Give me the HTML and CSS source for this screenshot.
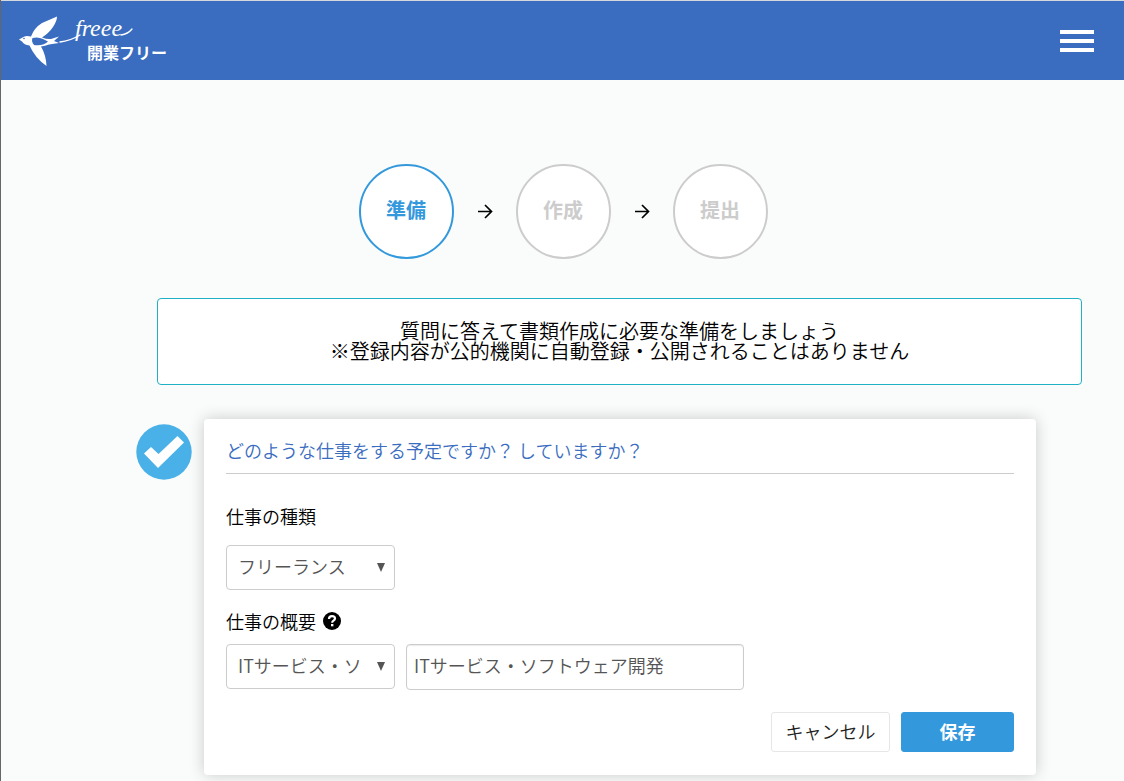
FILE: index.html
```html
<!DOCTYPE html>
<html lang="ja">
<head>
<meta charset="utf-8">
<meta name="viewport" content="width=device-width, initial-scale=1">
<title>開業フリー</title>
<link rel="stylesheet" href="styles.css">
</head>
<body>
<header class="header">
  <a class="logo" href="#" aria-label="freee 開業フリー">
    <svg class="logo-art" width="150" height="52" viewBox="19 14 150 52">
      <path fill="#fff" d="M19 38.500L22.500 36.500Q25 34 31 35.500Q34 27 42 22L57 15.500Q57 20 53 26Q49 32 42 36.500Q47 38.500 51 38L59 35.500L54 40L59 42L49 43.500Q45 45 41 45.500Q46 54 46.500 65Q35 57 29.500 44.500Q24 44 22 40.500Z"/>
      <path fill="#3a6dc0" d="M32.500 37Q38 35.500 43 38L48 40.500Q44 45 34 44Q31 40.500 32.500 37Z"/>
      <circle cx="24" cy="37.500" r="0.800" fill="#3a6dc0"/>
      <path fill="none" stroke="#fff" stroke-width="1.300" stroke-linecap="round" d="M60 41Q70 40 80 34M121 34Q128 33 132 28"/>
      <text class="logo-script" x="75" y="35">freee</text>
      <text class="logo-name" x="87" y="58">開業フリー</text>
    </svg>
  </a>
  <button class="menu" type="button" aria-label="メニュー"><span class="menu-bar"></span><span class="menu-bar"></span><span class="menu-bar"></span></button>
</header>
<main class="main">
  <ol class="steps">
    <li class="step step-current">準備</li>
    <li class="arrow" aria-hidden="true"><svg width="16" height="16" viewBox="0 0 16 16"><path d="M1 7.500H14.500M8 1L14.500 7.500L8 14" fill="none" stroke="#000" stroke-width="1.700"/></svg></li>
    <li class="step">作成</li>
    <li class="arrow" aria-hidden="true"><svg width="16" height="16" viewBox="0 0 16 16"><path d="M1 7.500H14.500M8 1L14.500 7.500L8 14" fill="none" stroke="#000" stroke-width="1.700"/></svg></li>
    <li class="step">提出</li>
  </ol>
  <p class="notice">質問に答えて書類作成に必要な準備をしましょう<br>※登録内容が公的機関に自動登録・公開されることはありません</p>
  <section class="question">
    <svg class="done" width="56" height="56" viewBox="0 0 56 56" aria-label="完了" role="img"><circle cx="28" cy="28" r="27.700" fill="#49b1e7"/><path fill="#fff" d="M8 29.500L15 23L22.500 30L41.500 12L48 18.500L22 44Z"/></svg>
    <form class="card">
      <h2 class="card-title">どのような仕事をする予定ですか？ していますか？</h2>
      <label class="label" for="kind">仕事の種類</label>
      <div class="fields">
        <div class="pick">
          <select class="select" id="kind"><option>フリーランス</option></select>
          <svg class="caret" width="8" height="9" viewBox="0 0 8 9"><path d="M0 0H8L4 9Z" fill="#555"/></svg>
        </div>
      </div>
      <div class="label-row">
        <label class="label" for="summary">仕事の概要</label>
        <button class="help" type="button" aria-label="ヘルプ"><svg width="18" height="18" viewBox="0 0 18 18"><circle cx="9" cy="9" r="9" fill="#000"/><path d="M6 7Q6 4.200 9 4.200Q12 4.200 12 6.600Q12 8 10.400 8.700Q9.200 9.200 9.200 10.700" fill="none" stroke="#fff" stroke-width="2.200"/><path d="M8 12H10.400V14.300H8Z" fill="#fff"/></svg></button>
      </div>
      <div class="fields">
        <div class="pick">
          <select class="select" id="summary"><option>ITサービス・ソフトウェア</option></select>
          <svg class="caret" width="8" height="9" viewBox="0 0 8 9"><path d="M0 0H8L4 9Z" fill="#555"/></svg>
        </div>
        <input class="input" type="text" aria-label="仕事の概要の詳細" value="ITサービス・ソフトウェア開発">
      </div>
      <div class="actions">
        <button class="button" type="button">キャンセル</button>
        <button class="button button-save" type="submit">保存</button>
      </div>
    </form>
  </section>
</main>
</body>
</html>
```
FILE: styles.css
```css
* {
  box-sizing: border-box;
}

body {
  margin: 0;
  border-left: 1px solid #666;
  background: #fafcfb;
  color: #000;
  font-family: "Noto Sans CJK JP", sans-serif;
  font-size: 18px;
  font-weight: 350;
  line-height: 24px;
}

button,
input,
select {
  font: inherit;
}

.header {
  display: flex;
  align-items: center;
  justify-content: space-between;
  height: 80px;
  padding: 0 30px 0 18px;
  border-top: 1px solid #d5d9de;
  background: #3a6dc0;
}

.logo,
.logo-art {
  display: block;
}

.logo-art {
  overflow: visible;
}

.logo-script {
  fill: #fff;
  font-family: "Liberation Serif", serif;
  font-size: 24px;
  font-style: italic;
  font-weight: 400;
}

.logo-name {
  fill: #fff;
  font-size: 16px;
  font-weight: 700;
}

.menu {
  display: grid;
  gap: 5px;
  width: 34px;
  padding: 0;
  border: 0;
  background: none;
}

.menu-bar {
  height: 4px;
  background: #fff;
}

.main {
  padding: 84px 88px 6px 135px;
}

.steps {
  display: flex;
  align-items: center;
  justify-content: center;
  gap: 23px;
  margin: 0 46px 39px 0;
  padding: 0;
  list-style: none;
}

.step {
  display: grid;
  place-items: center;
  width: 95px;
  height: 95px;
  padding-bottom: 4px;
  border: 2px solid #ccc;
  border-radius: 50%;
  background: #fff;
  color: #ccc;
  font-size: 20px;
  font-weight: 700;
}

.step-current {
  border-color: #3398dc;
  color: #3398dc;
}

.arrow {
  display: flex;
}

.notice {
  margin: 0 -46px 34px 21px;
  padding: 22px 16px 23px;
  border: 1px solid #1fb0c5;
  border-radius: 4px;
  background: #fff;
  font-size: 20px;
  line-height: 20px;
  text-align: center;
}

.question {
  display: flex;
  align-items: flex-start;
  gap: 12px;
}

.done {
  flex: none;
  margin-top: 5px;
}

.card {
  flex: 1;
  padding: 19px 22px 23px;
  border-radius: 4px;
  background: #fff;
  box-shadow: 0 0 16px rgba(0, 0, 0, 0.2);
}

.card-title {
  margin: 0 0 30px;
  padding-bottom: 11px;
  border-bottom: 1px solid #ccc;
  color: #3a6dc0;
  font-size: 18px;
  font-weight: 350;
}

.label {
  display: block;
}

.label-row {
  display: flex;
  align-items: center;
  gap: 7px;
  margin-top: 19px;
}

.label + .fields {
  margin-top: 17px;
}

.label-row + .fields {
  margin-top: 11px;
}

.help {
  display: flex;
  padding: 0;
  border: 0;
  background: none;
}

.fields {
  display: flex;
  align-items: flex-start;
  gap: 11px;
}

.pick {
  position: relative;
  width: 169px;
}

.select {
  display: block;
  width: 100%;
  height: 45px;
  padding: 0 31px 4px 11px;
  border: 1px solid #ccc;
  border-radius: 4px;
  appearance: none;
  background: #fff;
  color: #555;
}

.caret {
  position: absolute;
  top: 18px;
  right: 10px;
  pointer-events: none;
}

.input {
  width: 338px;
  height: 46px;
  padding: 0 7px 4px;
  border: 1px solid #ccc;
  border-radius: 4px;
  background: #fff;
  box-shadow: inset 0 1px 1px rgba(0, 0, 0, 0.08);
  color: #555;
}

.actions {
  display: flex;
  justify-content: flex-end;
  gap: 11px;
  margin-top: 22px;
}

.button {
  width: 119px;
  height: 40px;
  padding: 0 0 3px;
  border: 1px solid #e6e6e6;
  border-radius: 3px;
  background: #fff;
  color: #222;
}

.button-save {
  width: 113px;
  border-color: #3398dc;
  background: #3398dc;
  color: #fff;
  font-weight: 700;
}
```
